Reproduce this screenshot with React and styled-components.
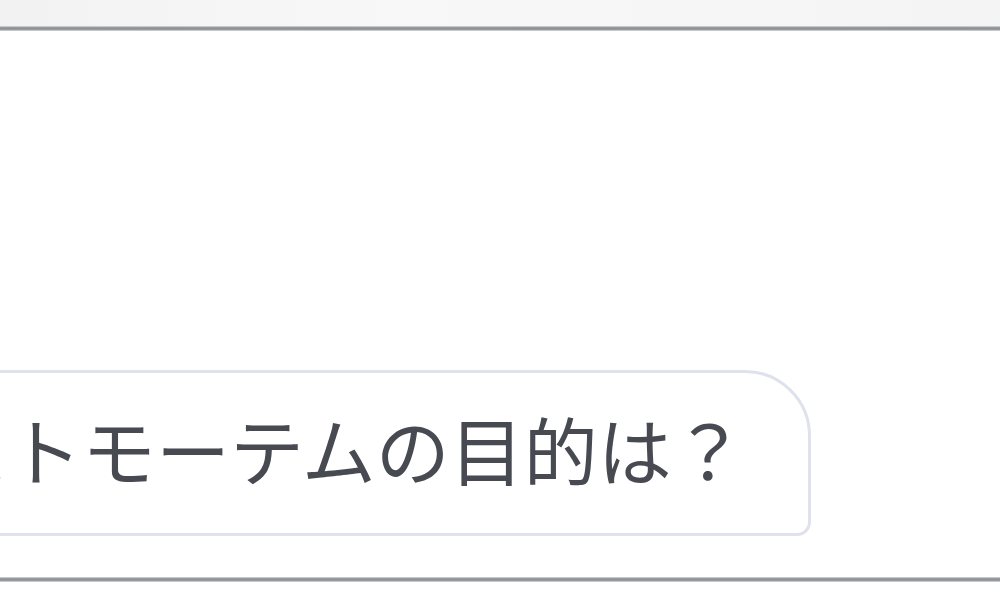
import styled, { createGlobalStyle } from "styled-components";

const GlobalStyle = createGlobalStyle`
  html, body {
    margin: 0;
    padding: 0;
    background: #ffffff;
  }
  body {
    font-family: "Noto Sans CJK JP", "Noto Sans", sans-serif;
  }
`;

export default function App() {
  return (
    <>
      <GlobalStyle />
      <Page>
        <TopStrip />
        <Rule />
        <ChatArea>
          <SuggestionChip>ポストモーテムの目的は？</SuggestionChip>
        </ChatArea>
        <Rule />
        <Footer />
      </Page>
    </>
  );
}

const Page = styled.div`
  display: flex;
  flex-direction: column;
  width: 1000px;
  height: 600px;
  overflow: hidden;
  background: #ffffff;
`;

const TopStrip = styled.div`
  height: 26px;
  background: linear-gradient(to right, #f2f2f2, #f8f8f8 40%, #f4f4f4);
`;

const Rule = styled.div`
  height: 5px;
  flex-shrink: 0;
  background: linear-gradient(
    to bottom,
    #dcdde0,
    #8e9097 35%,
    #8e9097 65%,
    #dcdde0
  );
`;

const ChatArea = styled.div`
  flex: 1;
  display: flex;
  flex-direction: column;
  justify-content: flex-end;
  align-items: flex-start;
  padding-bottom: 41px;
`;

/* the chip is zoomed far in, so its first glyphs run off the left edge */
const SuggestionChip = styled.div`
  display: flex;
  align-items: center;
  box-sizing: border-box;
  height: 166px;
  margin-left: -205px;
  padding: 0 62px 10px 62px;
  border: 3px solid #dfe2ec;
  border-radius: 66px 66px 14px 66px;
  background: #ffffff;
  color: #474a51;
  font-size: 74px;
  line-height: 1;
  white-space: nowrap;
`;

const Footer = styled.div`
  height: 18px;
  background: #ffffff;
`;
